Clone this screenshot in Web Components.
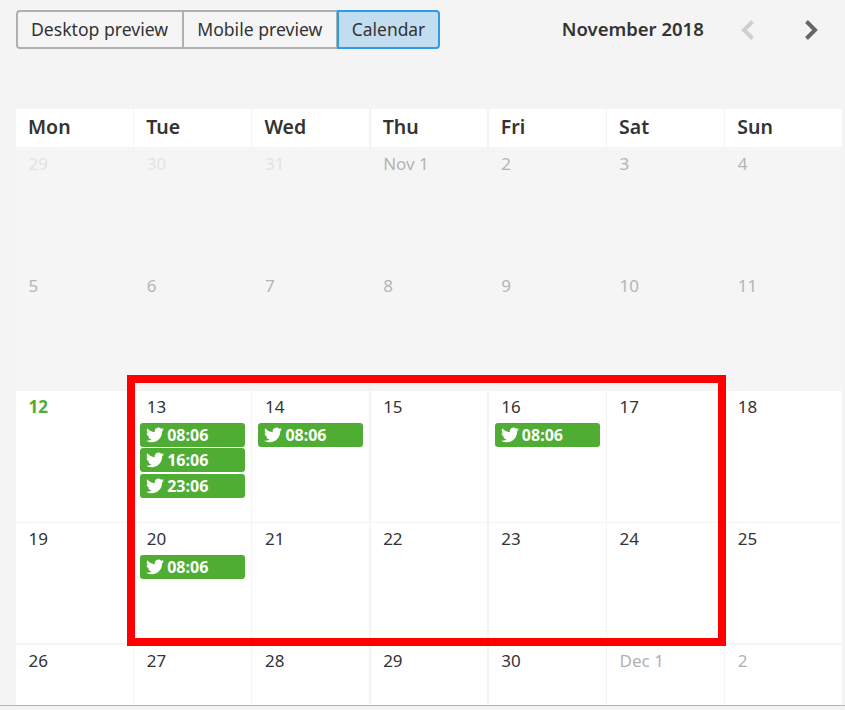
<!DOCTYPE html>
<html>
<head>
<meta charset="utf-8">
<style>
  html, body { margin: 0; height: 100%; overflow: hidden; }
  body { background: #f4f4f4; color: #333; font-family: "Noto Sans", "Open Sans", sans-serif; }
</style>
</head>
<body>
<schedule-page>
  <schedule-toolbar slot="toolbar" title="November 2018">
    <view-button>Desktop preview</view-button>
    <view-button>Mobile preview</view-button>
    <view-button active>Calendar</view-button>
  </schedule-toolbar>
  <month-grid slot="grid">
    <week-head>Mon</week-head><week-head>Tue</week-head><week-head>Wed</week-head><week-head>Thu</week-head><week-head>Fri</week-head><week-head>Sat</week-head><week-head>Sun</week-head>

    <day-cell tone="faint" date="29"></day-cell><day-cell tone="faint" date="30"></day-cell><day-cell tone="faint" date="31"></day-cell><day-cell tone="past" date="Nov 1"></day-cell><day-cell tone="past" date="2"></day-cell><day-cell tone="past" date="3"></day-cell><day-cell tone="past" date="4"></day-cell>

    <day-cell tone="past" date="5"></day-cell><day-cell tone="past" date="6"></day-cell><day-cell tone="past" date="7"></day-cell><day-cell tone="past" date="8"></day-cell><day-cell tone="past" date="9"></day-cell><day-cell tone="past" date="10"></day-cell><day-cell tone="past" date="11"></day-cell>

    <day-cell tone="today" date="12"></day-cell>
    <day-cell date="13"><tweet-slot>08:06</tweet-slot><tweet-slot>16:06</tweet-slot><tweet-slot>23:06</tweet-slot></day-cell>
    <day-cell date="14"><tweet-slot>08:06</tweet-slot></day-cell>
    <day-cell date="15"></day-cell>
    <day-cell date="16"><tweet-slot>08:06</tweet-slot></day-cell>
    <day-cell date="17"></day-cell>
    <day-cell date="18"></day-cell>

    <day-cell date="19"></day-cell>
    <day-cell date="20"><tweet-slot>08:06</tweet-slot></day-cell>
    <day-cell date="21"></day-cell><day-cell date="22"></day-cell><day-cell date="23"></day-cell><day-cell date="24"></day-cell><day-cell date="25"></day-cell>

    <day-cell date="26"></day-cell><day-cell date="27"></day-cell><day-cell date="28"></day-cell><day-cell date="29"></day-cell><day-cell date="30"></day-cell>
    <day-cell tone="next" date="Dec 1"></day-cell><day-cell tone="next" date="2"></day-cell>
  </month-grid>
  <red-frame slot="overlay"></red-frame>
</schedule-page>

<script>
const TWITTER = "M23.953 4.57a10 10 0 01-2.825.775 4.958 4.958 0 002.163-2.723c-.951.555-2.005.959-3.127 1.184a4.92 4.92 0 00-8.384 4.482C7.69 8.095 4.067 6.13 1.64 3.162a4.822 4.822 0 00-.666 2.475c0 1.71.87 3.213 2.188 4.096a4.904 4.904 0 01-2.228-.616v.06a4.923 4.923 0 003.946 4.827 4.996 4.996 0 01-2.212.085 4.936 4.936 0 004.604 3.417 9.867 9.867 0 01-6.102 2.105c-.39 0-.779-.023-1.17-.067a13.995 13.995 0 007.557 2.209c9.053 0 13.998-7.496 13.998-13.985 0-.21 0-.42-.015-.63A9.935 9.935 0 0024 4.59z"

function define(tag, html, setup) {
  const template = document.createElement("template")
  template.innerHTML = html
  customElements.define(tag, class extends HTMLElement {
    constructor() {
      super()
      this.attachShadow({ mode: "open" }).append(template.content.cloneNode(true))
    }
    connectedCallback() {
      if (setup) setup(this, this.shadowRoot)
    }
  })
}

define("schedule-page", `
  <style>
    :host { display: block; position: relative; height: 710px; }
    .line { height: 1px; background: #b4b4b4; }
  </style>
  <slot name="toolbar"></slot>
  <slot name="grid"></slot>
  <div class="line"></div>
  <slot name="overlay"></slot>
`)

define("schedule-toolbar", `
  <style>
    :host { display: flex; align-items: center; padding: 10px 0 0 16px; height: 39px; }
    .views { display: flex; }
    h2 { margin: 0 0 2px 121.5px; width: 142.5px; white-space: nowrap; font-size: 18.5px; font-weight: 600; color: #333; }
    nav { display: flex; margin-left: 37px; gap: 51px; }
    svg { display: block; width: 13px; height: 20px; }
    path { fill: none; stroke-width: 4; stroke-linejoin: miter; }
  </style>
  <div class="views"><slot></slot></div>
  <h2></h2>
  <nav>
    <svg viewBox="0 0 13 20"><path d="M11.5 1.5 L3 10 L11.5 18.5" stroke="#cfcfcf"/></svg>
    <svg viewBox="0 0 13 20"><path d="M1.5 1.5 L10 10 L1.5 18.5" stroke="#666"/></svg>
  </nav>
`, (el, root) => {
  root.querySelector("h2").textContent = el.getAttribute("title")
  el.removeAttribute("title")
})

define("view-button", `
  <style>
    :host {
      display: block; box-sizing: border-box; height: 39px; padding: 0 13.5px;
      border: 2px solid #abb1b4; border-left-width: 0; background: #f5f5f5;
      font-size: 17.6px; line-height: 34px; color: #333; white-space: nowrap;
    }
    :host(:first-child) { border-left-width: 2px; border-radius: 4px 0 0 4px; padding-left: 13px; }
    :host(:last-child) { border-radius: 0 4px 4px 0; }
    :host([active]) { background: #c2ddf0; border: 2px solid #2f9be3; margin-left: -1px; padding: 0 13px; font-size: 17.4px; }
  </style>
  <slot></slot>
`)

define("month-grid", `
  <style>
    :host {
      display: grid; box-sizing: border-box; width: 826px; margin: 60px 0 0 16px;
      grid-template-columns: repeat(7, 1fr);
      grid-template-rows: 38px 121px 120px 131px 120px 61px;
      column-gap: 1.5px; row-gap: 1px;
    }
    ::slotted(day-cell:nth-last-child(-n+7)) { border-top: 1px solid #f4f4f4; box-sizing: border-box; }
  </style>
  <slot></slot>
`)

define("week-head", `
  <style>
    :host {
      display: block; background: #fff; padding-left: 12px;
      font-size: 19.5px; font-weight: 600; line-height: 36px; color: #333;
    }
  </style>
  <slot></slot>
`)

define("day-cell", `
  <style>
    :host { display: block; background: #fff; min-width: 0; }
    :host([tone="faint"]), :host([tone="past"]) { background: #f5f5f5; }
    .date { padding: 4px 0 0 12.5px; height: 24px; font-size: 17px; line-height: 24px; color: #333; }
    :host([tone="faint"]) .date { color: #e3e3e3; }
    :host([tone="past"]) .date { color: #b4b4b4; }
    :host([tone="next"]) .date { color: #aeb2b4; }
    :host([tone="today"]) .date { color: #4fad33; font-weight: 700; }
    .events { display: flex; flex-direction: column; gap: 1.5px; padding: 3.75px 6px 0; }
  </style>
  <div class="date"></div>
  <div class="events"><slot></slot></div>
`, (el, root) => {
  root.querySelector(".date").textContent = el.getAttribute("date")
})

define("tweet-slot", `
  <style>
    :host {
      display: flex; align-items: center; gap: 3px; height: 24px; padding-left: 6px;
      background: #4fad33; border-radius: 3px;
      color: #fff; font-size: 16px; font-weight: 700;
    }
    svg { display: block; width: 18px; height: 18px; fill: #fff; }
  </style>
  <svg viewBox="0 0 24 24"><path d="${TWITTER}"/></svg>
  <slot></slot>
`)

define("red-frame", `
  <style>
    :host {
      position: absolute; left: 127px; top: 375px; width: 599px; height: 271px;
      box-sizing: border-box; border: 8px solid #f00; pointer-events: none;
    }
  </style>
`)
</script>
</body>
</html>
